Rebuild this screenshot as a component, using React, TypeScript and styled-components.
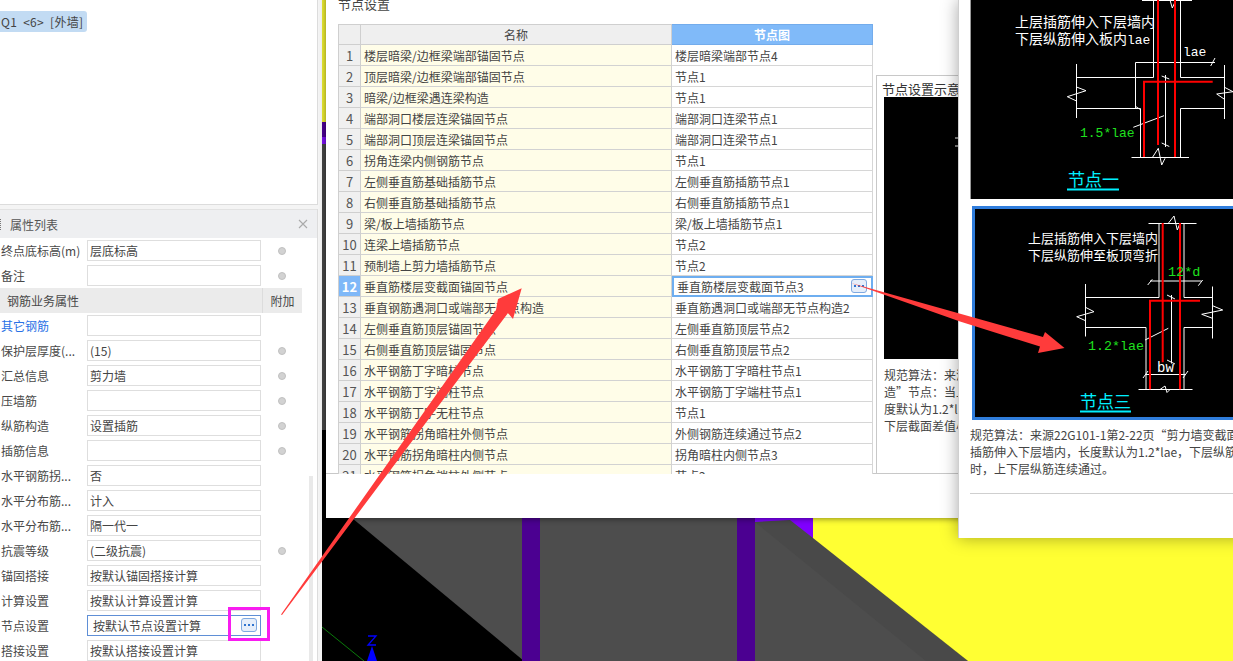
import React from "react";
import styled, { createGlobalStyle } from "styled-components";

const Global = createGlobalStyle`
  html, body { margin: 0; padding: 0; height: 100%; overflow: hidden; background: #f3f3f3; }
  * { box-sizing: border-box; }
  body { font-family: "Noto Sans CJK SC", "Noto Sans", sans-serif; font-size: 12px; color: #404040; }
`;

const Page = styled.div`
  position: relative;
  display: flex;
  width: 1233px;
  height: 661px;
  overflow: hidden;
`;

const Sidebar = styled.aside`
  width: 322px;
  flex: none;
  display: flex;
  flex-direction: column;
  gap: 4px;
  background: #f4f4f4;
`;

const TreePanel = styled.section`
  width: 318px;
  height: 205px;
  flex: none;
  padding-top: 11px;
  background: #fff;
  border-right: 1px solid #dcdcdc;
  border-bottom: 1px solid #dcdcdc;
`;

const TreeChip = styled.div`
  width: 87px;
  height: 21px;
  padding-left: 1px;
  line-height: 21px;
  white-space: pre;
  word-spacing: 3px;
  letter-spacing: 0.3px;
  background: #c2dbf3;
  border-radius: 0 3px 3px 0;
  color: #444;
`;

const PropsPanel = styled.section`
  position: relative;
  width: 318px;
  flex: 1;
  background: #fff;
  border-right: 1px solid #dcdcdc;
`;

const PropsHeader = styled.header`
  height: 29px;
  display: flex;
  align-items: center;
  justify-content: space-between;
  padding: 0 9px 0 10px;
  background: #eeeff1;
  border-top: 1px solid #e2e2e2;
  color: #555;
`;

const Grip = styled.i`
  position: absolute;
  left: 0;
  top: 10px;
  width: 1px;
  height: 11px;
  border-left: 1px dotted #777;
`;

const Row = styled.div`
  height: 25px;
  display: flex;
  align-items: center;
`;

const Label = styled.div<{ $link?: boolean }>`
  width: 87px;
  flex: none;
  padding-left: 1px;
  white-space: nowrap;
  color: ${(p) => (p.$link ? "#2a72e6" : "#484848")};
`;

const Field = styled.div<{ $active?: boolean }>`
  position: relative;
  width: 174px;
  height: 21px;
  flex: none;
  padding-left: ${(p) => (p.$active ? 5 : 2)}px;
  line-height: 19px;
  white-space: nowrap;
  border: 1px solid ${(p) => (p.$active ? "#5f8fd6" : "#dedede")};
  color: #444;
`;

const Radio = styled.i`
  width: 8px;
  height: 8px;
  margin-left: 17px;
  border-radius: 50%;
  background: #d2d2d2;
  border: 1px solid #c0c0c0;
`;

const SectionRow = styled.div`
  height: 25px;
  width: 302px;
  display: flex;
  align-items: center;
  background: #ebebeb;
  color: #484848;
`;

const SectionName = styled.div`
  flex: 1;
  padding-left: 7px;
`;

const SectionTag = styled.div`
  width: 40px;
  height: 100%;
  line-height: 25px;
  text-align: center;
  border-left: 1px solid #dcdcdc;
`;

const MoreButton = styled.span<{ $right: number; $top: number }>`
  position: absolute;
  right: ${(p) => p.$right}px;
  top: ${(p) => p.$top}px;
  width: 16px;
  height: 14px;
  display: flex;
  align-items: center;
  justify-content: center;
  gap: 2px;
  background: #e6eefa;
  border: 1px solid #7fa9e0;
  border-radius: 3px;
`;

const MoreDot = styled.i`
  width: 2px;
  height: 2px;
  background: #2f74d0;
`;

const ScrollThumb = styled.div`
  position: absolute;
  left: 309px;
  top: 267px;
  bottom: 0;
  width: 4px;
  background: #e9e9e9;
`;

const Canvas = styled.main`
  position: relative;
  flex: 1;
  background: #000;
`;

const Scene = styled.svg`
  position: absolute;
  inset: 0;
  display: block;
`;

const NodeDialog = styled.div`
  position: absolute;
  left: 4px;
  top: -8px;
  width: 700px;
  height: 526px;
  display: flex;
  flex-direction: column;
  background: #fff;
  box-shadow: 0 1px 6px rgba(0, 0, 0, 0.45);
`;

const DialogTitle = styled.div`
  height: 32px;
  flex: none;
  padding-left: 12px;
  line-height: 24px;
  font-size: 13px;
  color: #444;
`;

const DialogBody = styled.div`
  height: 450px;
  flex: none;
  display: flex;
  padding-left: 12px;
  border-bottom: 1px solid #c8c8c8;
`;

const TableClip = styled.div`
  width: 535px;
  height: 450px;
  flex: none;
  overflow: hidden;
`;

const Table = styled.table`
  width: 534px;
  table-layout: fixed;
  border-collapse: collapse;
  border-top: 1px solid #c4c4c4;
  border-left: 1px solid #c4c4c4;
`;

const HeadCell = styled.th<{ $on?: boolean }>`
  height: 20px;
  padding: 0;
  font-weight: ${(p) => (p.$on ? 700 : 400)};
  font-size: 12px;
  text-align: center;
  color: ${(p) => (p.$on ? "#fff" : "#444")};
  background: ${(p) => (p.$on ? "#80baf9" : "#efefef")};
  border: 1px solid ${(p) => (p.$on ? "#73acec" : "#cfcfcf")};
`;

const IndexCell = styled.td<{ $on?: boolean }>`
  height: 21px;
  padding: 0;
  text-align: center;
  font-size: 13px;
  font-weight: ${(p) => (p.$on ? 700 : 400)};
  color: ${(p) => (p.$on ? "#fff" : "#555")};
  background: ${(p) => (p.$on ? "#7fb8f8" : "#f0f0f0")};
  border: 1px solid #cfcfcf;
`;

const NameCell = styled.td`
  height: 21px;
  padding: 0 0 0 3px;
  white-space: nowrap;
  overflow: hidden;
  background: #fffde8;
  border: 1px solid #d2d2d2;
  color: #444;
`;

const ValueCell = styled.td<{ $on?: boolean }>`
  position: relative;
  height: 21px;
  padding: 0 0 0 ${(p) => (p.$on ? 5 : 3)}px;
  white-space: nowrap;
  overflow: hidden;
  background: #fff;
  border: 1px solid #d6d6d6;
  outline: ${(p) => (p.$on ? "2px solid #6eaef0" : "none")};
  outline-offset: -2px;
  color: #444;
`;

const PreviewBox = styled.div`
  flex: 1;
  margin: 51px 0 0 3px;
  padding: 5px 0 0 5px;
  overflow: hidden;
  border-left: 1px solid #c8c8c8;
  border-top: 1px solid #c8c8c8;
`;

const PreviewTitle = styled.div`
  height: 16px;
  line-height: 16px;
  font-size: 13px;
  color: #333;
  white-space: nowrap;
`;

const PreviewImage = styled.svg`
  display: block;
  width: 200px;
  height: 262px;
  margin: 0 0 0 2px;
  background: #000;
`;

const NoteText = styled.p<{ $top: number; $left: number }>`
  margin: ${(p) => p.$top}px 0 0 ${(p) => p.$left}px;
  line-height: 17px;
  white-space: nowrap;
  color: #444;
`;

const FigureDialog = styled.div`
  position: absolute;
  left: 636px;
  top: 0;
  width: 290px;
  height: 538px;
  display: flex;
  flex-direction: column;
  padding-left: 11px;
  background: #fff;
  border-left: 1px solid #cfcfcf;
  box-shadow: 0 0 16px rgba(0, 0, 0, 0.35);
`;

const FigureOne = styled.svg`
  display: block;
  flex: none;
  width: 279px;
  height: 199px;
  background: #000;
  border-left: 1px solid #999;
`;

const FigureThree = styled.svg`
  display: block;
  flex: none;
  width: 278px;
  height: 214px;
  margin: 7px 0 0 2px;
  background: #000;
  border: 3px solid #2f7ddc;
`;

const Divider = styled.hr`
  margin: 16px 0 0;
  border: 0;
  border-top: 1px solid #cfcfcf;
`;

const Overlay = styled.svg`
  position: absolute;
  inset: 0;
  display: block;
  pointer-events: none;
`;

const rows: { label: string; value: string; radio?: boolean; link?: boolean; more?: boolean; section?: boolean }[] = [
  { label: "终点底标高(m)", value: "层底标高", radio: true },
  { label: "备注", value: "", radio: true },
  { label: "钢筋业务属性", value: "", section: true },
  { label: "其它钢筋", value: "", link: true },
  { label: "保护层厚度(...", value: "(15)", radio: true },
  { label: "汇总信息", value: "剪力墙", radio: true },
  { label: "压墙筋", value: "", radio: true },
  { label: "纵筋构造", value: "设置插筋", radio: true },
  { label: "插筋信息", value: "", radio: true },
  { label: "水平钢筋拐...", value: "否" },
  { label: "水平分布筋...", value: "计入" },
  { label: "水平分布筋...", value: "隔一代一" },
  { label: "抗震等级", value: "(二级抗震)", radio: true },
  { label: "锚固搭接", value: "按默认锚固搭接计算" },
  { label: "计算设置", value: "按默认计算设置计算" },
  { label: "节点设置", value: "按默认节点设置计算", more: true },
  { label: "搭接设置", value: "按默认搭接设置计算" },
];

const nodes: [string, string][] = [
  ["楼层暗梁/边框梁端部锚固节点", "楼层暗梁端部节点4"],
  ["顶层暗梁/边框梁端部锚固节点", "节点1"],
  ["暗梁/边框梁遇连梁构造", "节点1"],
  ["端部洞口楼层连梁锚固节点", "端部洞口连梁节点1"],
  ["端部洞口顶层连梁锚固节点", "端部洞口连梁节点1"],
  ["拐角连梁内侧钢筋节点", "节点1"],
  ["左侧垂直筋基础插筋节点", "左侧垂直筋插筋节点1"],
  ["右侧垂直筋基础插筋节点", "右侧垂直筋插筋节点1"],
  ["梁/板上墙插筋节点", "梁/板上墙插筋节点1"],
  ["连梁上墙插筋节点", "节点2"],
  ["预制墙上剪力墙插筋节点", "节点2"],
  ["垂直筋楼层变截面锚固节点", "垂直筋楼层变截面节点3"],
  ["垂直钢筋遇洞口或端部无节点构造", "垂直筋遇洞口或端部无节点构造2"],
  ["左侧垂直筋顶层锚固节点", "左侧垂直筋顶层节点2"],
  ["右侧垂直筋顶层锚固节点", "右侧垂直筋顶层节点2"],
  ["水平钢筋丁字暗柱节点", "水平钢筋丁字暗柱节点1"],
  ["水平钢筋丁字端柱节点", "水平钢筋丁字端柱节点1"],
  ["水平钢筋丁字无柱节点", "节点1"],
  ["水平钢筋拐角暗柱外侧节点", "外侧钢筋连续通过节点2"],
  ["水平钢筋拐角暗柱内侧节点", "拐角暗柱内侧节点3"],
  ["水平钢筋拐角端柱外侧节点", "节点2"],
];

const More = ({ right, top }: { right: number; top: number }) => (
  <MoreButton $right={right} $top={top}>
    <MoreDot />
    <MoreDot />
    <MoreDot />
  </MoreButton>
);

const CJK = '"Noto Sans CJK SC", sans-serif';
const MONO = '"Liberation Mono", monospace';

const FigureOneDrawing = () => (
  <FigureOne viewBox="971 0 278 199">
    <path
      fill="none"
      stroke="#fff"
      strokeWidth="1"
      d="M1142 .5H1192M1153.5 0V77.5H1076.5M1180.5 0V77.5H1224.5M1076.5 64V118M1224.5 65V119M1076.5 108.5H1140.5V157M1224.5 108.5H1180.5V157M1131.5 157.5H1189M1076.5 87L1086 90.7L1067.3 96.7L1076.5 101M1224.5 87.3L1233 91.7L1216.7 94L1224.5 99.3M1135.5 108V62.5H1215M1210.7 66L1215 58M1165.5 75V147M1161.7 76L1169.3 79M1161.7 143L1169.3 146.5M1133.3 127.3L1164 115.7M1135 106L1141 110M1152.7 157L1158.3 148.3L1161.7 165L1165 158.3M1170 0L1172.3 8L1175 2"
    />
    <path
      fill="none"
      stroke="#f00"
      strokeWidth="2"
      d="M1158 0V145M1175 0V157M1212.7 81.7H1144V157"
    />
    <text x="1015" y="27" fill="#fff" fontFamily={CJK} fontSize="14">上层插筋伸入下层墙内</text>
    <text x="1015" y="44" fill="#fff" fontFamily={CJK} fontSize="14">
      下层纵筋伸入板内<tspan fontFamily={MONO} fontSize="13">lae</tspan>
    </text>
    <text x="1183" y="56" fill="#fff" fontFamily={MONO} fontSize="13">lae</text>
    <text x="1080" y="137" fill="#1fe01f" fontFamily={MONO} fontSize="13">1.5*lae</text>
    <text x="1068" y="186" fill="#00f0ff" fontFamily={CJK} fontSize="17">节点一</text>
    <rect x="1067" y="188.5" width="52" height="2" fill="#00f0ff" />
  </FigureOne>
);

const FigureThreeDrawing = () => (
  <FigureThree viewBox="975 209 272 208">
    <path
      fill="none"
      stroke="#fff"
      strokeWidth="1"
      d="M1148.5 223.5H1196.5M1159 223V297.5H1085.5M1184 223V297.5H1212.5M1085.5 284V336.5M1212.5 286.5V338.5M1085.5 327.5H1146V389M1212.5 327.5H1184V389M1138.5 389.5H1192.5M1150 281H1201.5M1147.7 285L1152.3 279.3M1198.3 285.7L1202.7 280M1145 374.5H1186M1143 378L1148 371M1183 378L1188 371M1171.5 295V363.5M1167 295L1175 299M1167 360L1175 364M1145 340L1168.3 328.3M1085.5 307.3L1094 311.7L1076.7 316.7L1085.5 320.7M1212.5 305.7L1222.7 310L1201.7 314.3L1212.5 318.3M1168.3 223.3L1174 216L1177.3 230L1180 223.3M1160 389.5L1165 386L1167 392.5L1170 389.5"
    />
    <path
      fill="none"
      stroke="#f00"
      strokeWidth="2"
      d="M1162.7 223V362.3M1180 223V389.3M1200 300.7H1150V389.3"
    />
    <text x="1028" y="243" fill="#fff" fontFamily={CJK} fontSize="13">上层插筋伸入下层墙内</text>
    <text x="1028" y="260" fill="#fff" fontFamily={CJK} fontSize="13">下层纵筋伸至板顶弯折</text>
    <text x="1168" y="276" fill="#1fe01f" fontFamily={MONO} fontSize="13.5">12*d</text>
    <text x="1088" y="350" fill="#1fe01f" fontFamily={MONO} fontSize="13.3">1.2*lae</text>
    <text x="1157" y="372" fill="#fff" fontFamily={MONO} fontSize="14">bw</text>
    <text x="1080" y="408" fill="#00f0ff" fontFamily={CJK} fontSize="17">节点三</text>
    <rect x="1080" y="410.5" width="51" height="2" fill="#00f0ff" />
  </FigureThree>
);

export default function App() {
  return (
    <Page>
      <Global />
      <Sidebar>
        <TreePanel>
          <TreeChip>{"Q1 <6> [外墙]"}</TreeChip>
        </TreePanel>
        <PropsPanel>
          <Grip />
          <PropsHeader>
            <span>属性列表</span>
            <svg width="10" height="10" viewBox="0 0 10 10">
              <path d="M1 1L9 9M9 1L1 9" stroke="#aaa" strokeWidth="1.1" />
            </svg>
          </PropsHeader>
          {rows.map((r) =>
            r.section ? (
              <SectionRow key={r.label}>
                <SectionName>{r.label}</SectionName>
                <SectionTag>附加</SectionTag>
              </SectionRow>
            ) : (
              <Row key={r.label + r.value}>
                <Label $link={r.link}>{r.label}</Label>
                <Field $active={r.more}>
                  {r.value}
                  {r.more && <More right={3} top={2} />}
                </Field>
                {r.radio && <Radio />}
              </Row>
            )
          )}
          <ScrollThumb />
        </PropsPanel>
      </Sidebar>

      <Canvas>
        <Scene width="911" height="661" viewBox="322 0 911 661">
          <rect x="322" y="0" width="911" height="122" fill="#e8e830" />
          <rect x="322" y="122" width="911" height="15" fill="#4b0091" />
          <rect x="322" y="137" width="911" height="7" fill="#7a10f0" />
          <rect x="322" y="144" width="911" height="286" fill="#454545" />
          <polygon points="352,518 790,518 968,661 524,661" fill="#4d4d4d" />
          <polygon points="755,522 790,520 968,661 926,661" fill="#494949" />
          <polygon points="755,518 813,518 813,538 790,520 755,522" fill="#8000ff" />
          <rect x="522" y="518" width="18" height="143" fill="#4b0091" />
          <rect x="737" y="518" width="18" height="143" fill="#4b0091" />
          <polygon points="813,518 1233,518 1233,661 968,661 813,538" fill="#ffff33" />
          <path d="M322 627L364 661" stroke="#0a7a0a" strokeWidth="1" fill="none" />
          <path d="M368 636H376L368 645H376" stroke="#0000ff" strokeWidth="1.3" fill="none" />
          <polygon points="372,646 377,661 367,661" fill="#0000ff" />
        </Scene>

        <NodeDialog>
          <DialogTitle>节点设置</DialogTitle>
          <DialogBody>
            <TableClip>
              <Table>
                <colgroup>
                  <col width="22" />
                  <col width="311" />
                  <col width="201" />
                </colgroup>
                <thead>
                  <tr>
                    <HeadCell />
                    <HeadCell>名称</HeadCell>
                    <HeadCell $on>节点图</HeadCell>
                  </tr>
                </thead>
                <tbody>
                  {nodes.map(([name, value], i) => (
                    <tr key={name}>
                      <IndexCell $on={i === 11}>{i + 1}</IndexCell>
                      <NameCell>{name}</NameCell>
                      <ValueCell $on={i === 11}>
                        {value}
                        {i === 11 && <More right={5} top={3} />}
                      </ValueCell>
                    </tr>
                  ))}
                </tbody>
              </Table>
            </TableClip>
            <PreviewBox>
              <PreviewTitle>节点设置示意图</PreviewTitle>
              <PreviewImage viewBox="0 0 200 262">
                <path d="M71 41H74M71 49H74" stroke="#fff" strokeWidth="1" />
              </PreviewImage>
              <NoteText $top={7} $left={2}>
                规范算法：来源22G101-1第2-22页
                <br />
                造”节点：当上层插筋伸入下层墙内
                <br />
                度默认为1.2*lae，下层纵筋伸至板顶
                <br />
                下层截面差值小于等于30时
              </NoteText>
            </PreviewBox>
          </DialogBody>
        </NodeDialog>

        <FigureDialog>
          <FigureOneDrawing />
          <FigureThreeDrawing />
          <NoteText $top={6} $left={0}>
            规范算法：来源22G101-1第2-22页“剪力墙变截面
            <br />
            插筋伸入下层墙内，长度默认为1.2*lae，下层纵筋
            <br />
            时，上下层纵筋连续通过。
          </NoteText>
          <Divider />
        </FigureDialog>
      </Canvas>

      <Overlay width="1233" height="661" viewBox="0 0 1233 661">
        <rect x="229.5" y="608.5" width="39" height="31" fill="none" stroke="#f81cf0" strokeWidth="3" />
        <polygon
          points="281,614.5 496,310 498,299 521.7,288.3 513,319 508,313 282,615"
          fill="#ff3b3b"
        />
        <polygon
          points="851,283 1043,337 1045,332 1064.5,348 1038,353 1040,346.5 960,321.5"
          fill="#ff3b3b"
        />
      </Overlay>
    </Page>
  );
}
